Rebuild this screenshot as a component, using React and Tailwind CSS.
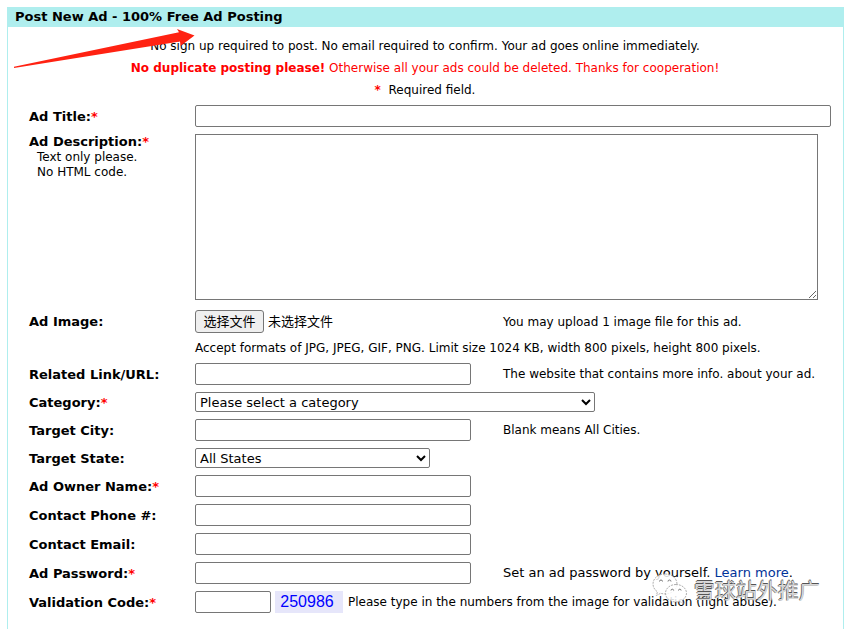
import { useRef } from "react";
import clsx from "clsx";

const BOX = "border border-[#767676] rounded-[2px] bg-white";

function Required() {
  return <span className="text-[#ff0000] font-bold">*</span>;
}

function Row({ id, label, required, note, compact, children }) {
  return (
    <div className="flex items-start">
      <div className="-mb-0.5 w-[166px] shrink-0">
        <label
          htmlFor={id}
          className={clsx(
            "block text-[13px] font-bold",
            note && "leading-4",
            !note && (compact ? "leading-[22px]" : "leading-6"),
          )}
        >
          {label}
          {required && <Required />}
        </label>
        {note && <p className="pl-2 leading-[15px] whitespace-pre-line">{note}</p>}
      </div>
      <div className="flex-1 min-w-0">{children}</div>
    </div>
  );
}

function TextRow({ id, label, required, type = "text", hint }) {
  return (
    <Row id={id} label={label} required={required}>
      <div className="flex items-center">
        <input id={id} type={type} className={clsx(BOX, "h-[22px] w-[276px] px-1 text-[13px]")} />
        {hint && <p className="ml-8">{hint}</p>}
      </div>
    </Row>
  );
}

function SelectRow({ id, label, required, option, className }) {
  return (
    <Row id={id} label={label} required={required} compact>
      <select id={id} className={clsx(BOX, "block h-5 text-[13px]", className)}>
        <option>{option}</option>
      </select>
    </Row>
  );
}

function Arrow() {
  return (
    <svg className="absolute left-[13px] top-[28px] pointer-events-none" width="183" height="42" viewBox="13 28 183 42" aria-hidden="true">
      <path d="M14 66.800 L179 32.300 L177 29 L194.500 35.500 L180.500 46 L180 41.500 L147 46.800 L14 68 Z" fill="#ff2212" />
    </svg>
  );
}

function Watermark() {
  return (
    <div className="absolute left-[652px] top-[573px] flex items-center gap-1.5 pointer-events-none">
      <svg width="36" height="32" viewBox="0 0 36 32" aria-hidden="true">
        <g fill="#ffffff" fillOpacity="0.85" stroke="#999999" strokeWidth="0.8" strokeDasharray="2 1">
          <path d="M13 1C6 1 1 5.500 1 11c0 3.200 1.700 6 4.500 7.800L4.300 22.500 8.600 20.300c1.400.4 2.900.6 4.400.6 7 0 12-4.400 12-9.900S20 1 13 1z" />
          <path d="M24 11.500c-6 0-10.500 3.900-10.500 8.700S18 29 24 29c1.300 0 2.500-.2 3.700-.5l3.600 1.900-1-3.200c2.500-1.600 4.200-4.100 4.200-7 0-4.800-4.500-8.700-10.500-8.700z" />
        </g>
        <g fill="none" stroke="#777777" strokeWidth="1">
          <path d="M7.500 8.500a1.500 1.500 0 0 1 3 0M16 8.500a1.500 1.500 0 0 1 3 0M19 17.500a1.300 1.300 0 0 1 2.600 0M26.500 17.500a1.300 1.300 0 0 1 2.600 0" />
        </g>
      </svg>
      <span className="font-['Noto_Sans_CJK_SC',sans-serif] text-[21px] leading-8 text-[#d8d8d8] [text-shadow:0_-1px_0_#555,-1px_0_0_#777]">
        雪球站外推广
      </span>
    </div>
  );
}

export default function App() {
  const fileRef = useRef(null);

  return (
    <div className="relative flex flex-col min-h-screen bg-white pt-[7px] pl-[7px] pr-[3px] text-[12px] text-black font-[Verdana,'DejaVu_Sans','Noto_Sans_CJK_SC',sans-serif]">
      <h1 className="h-5 bg-[#afeeee] pl-2 text-[13px] leading-5 font-bold">
        Post New Ad - 100% Free Ad Posting
      </h1>
      <form className="flex-1 border-x border-[#afeeee] pt-2 pl-[21px] pr-3 pb-4" onSubmit={(e) => e.preventDefault()}>
        <div className="pb-1 -ml-2.5 text-center leading-[22px]">
          <p>No sign up required to post. No email required to confirm. Your ad goes online immediately.</p>
          <p className="text-[#ff0000]">
            <b>No duplicate posting please!</b> Otherwise all your ads could be deleted. Thanks for cooperation!
          </p>
          <p>
            <Required />
            &nbsp; Required field.
          </p>
        </div>

        <div className="flex flex-col gap-[7px]">
          <Row id="title" label="Ad Title:" required>
            <input id="title" type="text" className={clsx(BOX, "block h-[22px] w-full px-1 text-[13px]")} />
          </Row>
          <Row id="description" label="Ad Description:" required note={"Text only please.\nNo HTML code."}>
            <div className="pr-[13px] pb-[3px]">
              <textarea
                id="description"
                className="block h-[166px] w-full resize border border-[#767676] bg-white px-1 text-[13px]"
              />
            </div>
          </Row>
          <Row id="image" label="Ad Image:">
            <div className="flex items-center">
              <div className="flex w-[276px] items-center gap-1 text-[13px]">
                <input ref={fileRef} id="image" type="file" className="hidden" />
                <button
                  type="button"
                  onClick={() => fileRef.current.click()}
                  className="h-[23px] w-[69px] rounded-[3px] border border-[#767676] bg-[#efefef]"
                >
                  选择文件
                </button>
                <span>未选择文件</span>
              </div>
              <p className="ml-8">You may upload 1 image file for this ad.</p>
            </div>
            <p className="mt-[7px] leading-4">
              Accept formats of JPG, JPEG, GIF, PNG. Limit size 1024 KB, width 800 pixels, height 800 pixels.
            </p>
          </Row>
          <TextRow id="url" label="Related Link/URL:" hint="The website that contains more info. about your ad." />
          <SelectRow id="category" label="Category:" required option="Please select a category" className="w-[400px]" />
          <TextRow id="city" label="Target City:" hint="Blank means All Cities." />
          <SelectRow id="state" label="Target State:" option="All States" className="w-[235px]" />
          <TextRow id="owner" label="Ad Owner Name:" required />
          <TextRow id="phone" label="Contact Phone #:" type="tel" />
          <TextRow id="email" label="Contact Email:" type="email" />
          <TextRow
            id="password"
            label="Ad Password:"
            required
            type="password"
            hint={
              <span className="text-[13px]">
                Set an ad password by yourself. <a href="#password" className="text-[#003399]">Learn more</a>.
              </span>
            }
          />
          <Row id="code" label="Validation Code:" required>
            <div className="flex items-center">
              <input id="code" type="text" className={clsx(BOX, "h-[22px] w-[76px] px-1 text-[13px]")} />
              <span className="ml-1 h-[22px] w-[68px] bg-[#e6e6fa] pr-1 text-center font-['Liberation_Sans',sans-serif] text-[16px] leading-[22px] text-[#0000ff]">
                250986
              </span>
              <p className="ml-[5px]">Please type in the numbers from the image for validation (fight abuse).</p>
            </div>
          </Row>
        </div>
      </form>
      <Arrow />
      <Watermark />
    </div>
  );
}
